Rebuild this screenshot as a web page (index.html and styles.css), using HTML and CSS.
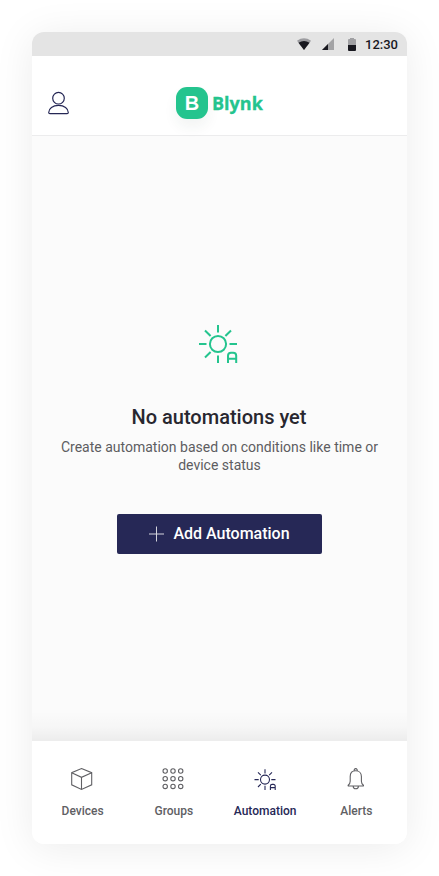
FILE: index.html
```html
<!DOCTYPE html>
<html lang="en">
<head>
<meta charset="utf-8">
<title>Blynk</title>
<link rel="stylesheet" href="styles.css">
</head>
<body>
<svg width="0" height="0" class="defs">
  <symbol id="sun" viewBox="0 0 40 40">
    <circle cx="20" cy="20" r="8.1"/>
    <path d="M20 1v7.5M20 31.5V39M1 20h7.5M31.5 20H39M7 6.5l5.6 5.5M33 6.5l-5.6 5.5M7 33.5l5.6-5.5M30 39v-7.2a3 3 0 0 1 3-3h2.2a3 3 0 0 1 3 3V39M30 34.7h8.2"/>
  </symbol>
</svg>
<div class="phone">
  <div class="status">
    <svg class="wifi" width="14" height="12" viewBox="0 0 14 12"><path d="M0 2.7Q7-2.1 14 2.7L7 12z" fill="#9c9ca0"/><path d="M1.5 4.8Q7 1.1 12.5 4.8L7 12z" fill="#18181f"/></svg>
    <svg class="signal" width="12" height="12" viewBox="0 0 12 12"><path d="M12 0v12H0z" fill="#a3a3a5"/><path d="M6 6v6H0z" fill="#18181f"/></svg>
    <svg class="battery" width="8" height="13" viewBox="0 0 8 13"><path d="M0 2Q0 1 1 1h1V0h4v1h1q1 0 1 1v5H0z" fill="#a0a0a3"/><path d="M0 7h8v5q0 1-1 1H1q-1 0-1-1z" fill="#18181f"/></svg>
    <span class="time">12:30</span>
  </div>
  <header class="header">
    <svg class="user" width="22" height="24" viewBox="0 0 22 24"><circle cx="10.5" cy="7.2" r="5.8"/><path d="M.7 21.5c0-4 4-7.1 9.8-7.1s9.8 3.1 9.8 7.1q0 1.2-1.2 1.2H1.9Q.7 22.7.7 21.5z"/></svg>
    <div class="brand"><span class="mark">B</span><span class="name">Blynk</span></div>
  </header>
  <main class="empty">
    <svg class="hero" width="40" height="40"><use href="#sun"/></svg>
    <h1>No automations yet</h1>
    <p>Create automation based on conditions like time or device status</p>
    <button class="add"><svg width="16" height="16" viewBox="0 0 16 16"><path d="M7.5 .5v15M0 8h15"/></svg><span>Add Automation</span></button>
  </main>
  <nav class="nav">
    <a class="item"><svg width="24" height="24" viewBox="0 0 24 24"><path d="M11.5 1.5l10.2 4.2v12.1L11.5 22.5 1.7 17.8V5.7zM1.7 5.7l9.8 4.6 10.2-4.6M11.5 10.3v12.2"/></svg><span>Devices</span></a>
    <a class="item"><svg class="dots" width="24" height="24" viewBox="0 0 24 24"><circle cx="4.2" cy="4" r="2.2"/><circle cx="12" cy="4" r="2.2"/><circle cx="19.7" cy="4" r="2.2"/><circle cx="4.2" cy="11.7" r="2.2"/><circle cx="12" cy="11.7" r="2.2"/><circle cx="19.7" cy="11.7" r="2.2"/><circle cx="4.2" cy="19.4" r="2.2"/><circle cx="12" cy="19.4" r="2.2"/><circle cx="19.7" cy="19.4" r="2.2"/></svg><span>Groups</span></a>
    <a class="item active"><svg class="auto" width="24" height="24" viewBox="0 0 24 24"><circle cx="12" cy="12.6" r="4.5"/><path d="M12 2.3v4.2M12 18.8V23M1.5 12.6h4.2M18.3 12.6h4.2M5 5.4l2.8 2.8M19 5.4l-2.8 2.8M5 20l2.8-2.8M17.4 23v-3.8a1.8 1.8 0 0 1 1.8-1.8h1.2a1.8 1.8 0 0 1 1.8 1.8V23M17.4 20.6h4.8"/></svg><span>Automation</span></a>
    <a class="item"><svg width="24" height="24" viewBox="0 0 24 24"><path d="M10.3 4a1.6 1.6 0 1 1 2.8 0M4.2 18.2c1.5-1.2 2-2.2 2-4V9.4C6.2 6 8.4 3.7 11.7 3.7s5.7 2.3 5.7 5.7v4.8c0 1.8.5 2.8 2 4q.4.8-.4.8H4.6q-.8 0-.4-.8zM9.2 19.2a2.6 2.6 0 0 0 5.2 0"/></svg><span>Alerts</span></a>
  </nav>
</div>
</body>
</html>
```
FILE: styles.css
```css
* { box-sizing: border-box; }
body { margin: 0; padding: 32px; background: #fff; font-family: Roboto, sans-serif; overflow: hidden; }
.defs { position: absolute; }
svg { display: block; fill: none; }
.phone { width: 375px; height: 812px; border-radius: 12px; overflow: hidden; background: #fbfbfb; display: flex; flex-direction: column; box-shadow: 0 4px 40px rgba(0,0,0,.08); }
.status { height: 24px; flex: none; background: #e4e4e4; display: flex; align-items: center; justify-content: flex-end; padding-right: 9px; color: #18181f; }
.signal { margin-left: 11px; }
.battery { margin-left: 14px; }
.time { margin-left: 9px; font-size: 13px; font-weight: 500; line-height: 24px; padding-top: 1px; }
.header { height: 80px; flex: none; background: #fff; border-bottom: 1px solid #ececed; display: grid; grid-template-columns: 128px 1fr; align-items: center; padding-left: 16px; padding-top: 15px; }
.user { stroke: #252755; stroke-width: 1.2; }
.brand { display: flex; align-items: center; gap: 4px; color: #24c48e; }
.mark { width: 32px; height: 32px; margin-left: 0; border-radius: 11px; background: #24c48e; color: #fff; font: 700 20px/33px "Liberation Sans", sans-serif; text-align: center; box-shadow: 0 8px 14px rgba(36,60,50,.06); }
.name { font: 700 18px/30px "Open Sans", sans-serif; -webkit-text-stroke: .3px #24c48e; }
.empty { flex: 1; display: flex; flex-direction: column; align-items: center; padding-top: 188px; background: linear-gradient(transparent calc(100% - 30px), rgba(0,0,0,.02) calc(100% - 14px), rgba(0,0,0,.06)); }
.hero { stroke: #24c48e; stroke-width: 2; margin-right: 3px; }
h1 { margin: 40px 1px 0 0; font-size: 20px; line-height: 26px; font-weight: 500; color: #28272f; }
p { margin: 8px 0 0; width: 325px; text-align: center; font-size: 14px; line-height: 18px; color: #5d5d61; }
.add { margin-top: 40px; width: 205px; height: 40px; padding: 0; border: 0; border-radius: 2px; background: #262856; color: #fff; font: 500 16px/24px Roboto, sans-serif; display: flex; align-items: center; justify-content: center; gap: 8px; }
.add svg { stroke: #d4d4dd; stroke-width: 1; }
.nav { height: 103px; flex: none; background: #fff; display: flex; padding: 26px 5px 0; }
.item { flex: 1; display: flex; flex-direction: column; align-items: center; gap: 10px; color: #606064; font-size: 12px; font-weight: 500; line-height: 20px; }
.item svg { stroke: currentColor; stroke-width: 1.1; margin-right: 1px; }
.active { color: #262856; }
```
